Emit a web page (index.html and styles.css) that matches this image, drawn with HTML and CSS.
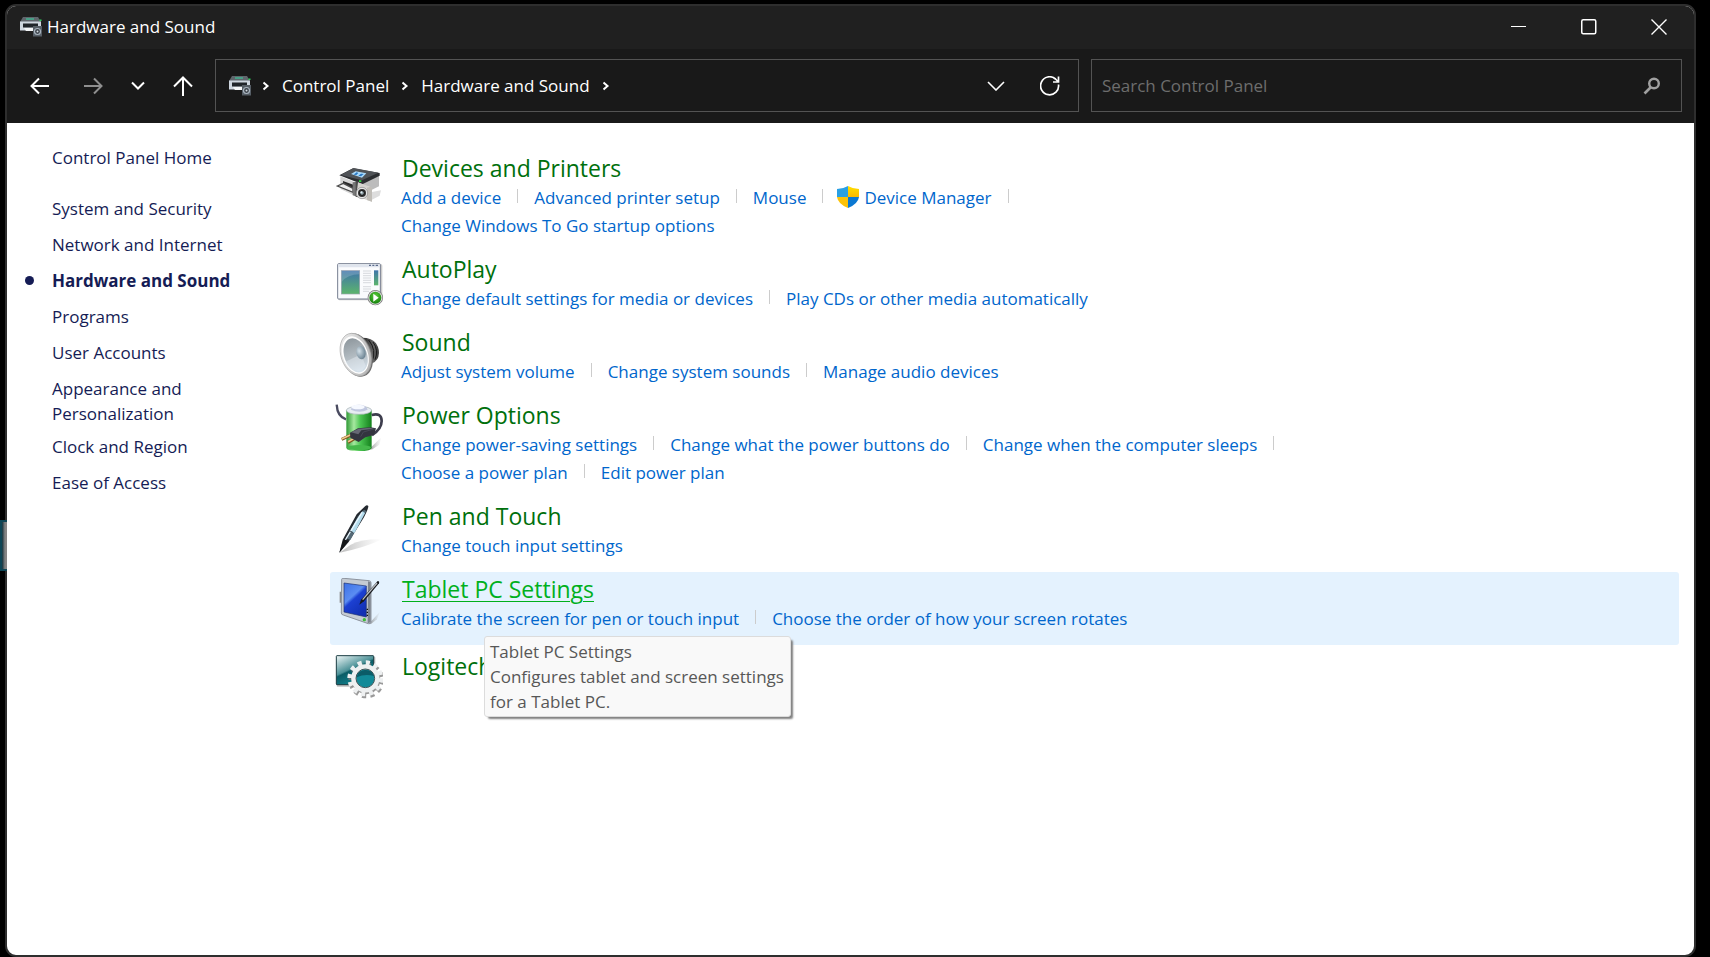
FILE: index.html
```html
<!DOCTYPE html>
<html lang="en">
<head>
<meta charset="utf-8">
<meta name="viewport" content="width=device-width, initial-scale=1">
<title>Hardware and Sound</title>
<link rel="stylesheet" href="styles.css">
</head>
<body>
<svg class="defs" aria-hidden="true">
  <defs>
    <linearGradient id="screenBlueGreen" x1="0" y1="0" x2="0" y2="1"><stop offset="0" stop-color="#3f74ab"/><stop offset="1" stop-color="#5cb56c"/></linearGradient>
    <linearGradient id="metal" x1="0" y1="0" x2="1" y2="1"><stop offset="0" stop-color="#f4f4f4"/><stop offset="1" stop-color="#a9a9a9"/></linearGradient>
    <linearGradient id="cone" x1="0" y1="0" x2="0" y2="1"><stop offset="0" stop-color="#8f989e"/><stop offset=".6" stop-color="#b9c2c8"/><stop offset="1" stop-color="#d8e4ee"/></linearGradient>
    <linearGradient id="magnet" x1="0" y1="0" x2="1" y2="0"><stop offset="0" stop-color="#222"/><stop offset=".7" stop-color="#666"/><stop offset="1" stop-color="#333"/></linearGradient>
    <linearGradient id="cell" x1="0" y1="0" x2="1" y2="0"><stop offset="0" stop-color="#2f9a35"/><stop offset=".3" stop-color="#a6e8a0"/><stop offset=".55" stop-color="#4cc653"/><stop offset="1" stop-color="#14801c"/></linearGradient>
    <linearGradient id="tabletScreen" x1="0" y1="0" x2=".6" y2="1"><stop offset="0" stop-color="#3c70e6"/><stop offset=".45" stop-color="#5b8df2"/><stop offset=".55" stop-color="#1c40d2"/><stop offset="1" stop-color="#1230b4"/></linearGradient>
    <linearGradient id="teal" x1="0" y1="0" x2=".6" y2="1"><stop offset="0" stop-color="#f2f9f9"/><stop offset=".5" stop-color="#4a9096"/><stop offset=".55" stop-color="#0a5c66"/><stop offset="1" stop-color="#148a96"/></linearGradient>
    <radialGradient id="playGreen" cx=".5" cy=".35" r=".7"><stop offset="0" stop-color="#5ccf3a"/><stop offset="1" stop-color="#0f7a08"/></radialGradient>
    <radialGradient id="dome" cx=".35" cy=".35" r=".7"><stop offset="0" stop-color="#d4e0e8"/><stop offset="1" stop-color="#68808f"/></radialGradient>
    <linearGradient id="shadow" x1="0" y1="0" x2="1" y2="0"><stop offset="0" stop-color="#777" stop-opacity=".7"/><stop offset="1" stop-color="#aaa" stop-opacity="0"/></linearGradient>
    <linearGradient id="shieldYellow" x1="0" y1="0" x2="0" y2="1"><stop offset="0" stop-color="#ffe000"/><stop offset="1" stop-color="#fcb900"/></linearGradient>
    <symbol id="hardware" viewBox="0 0 24 20">
      <path d="M4 0h15l3 5H1z" fill="#5f666c"/><path d="M7 2h8" stroke="#35d6a0" stroke-width="1.2"/>
      <path d="M1 4.500h21v9H1z" fill="#ced6df"/><path d="M4 6.500h15v4H4z" fill="#20252a"/><path d="M20.500 2.500h2v1.500h-2z" fill="#30d060"/>
      <path d="M5 11h11v3H7z" fill="#f3f5f7"/><path d="M14 9h9v10.500h-9z" fill="#565e66"/>
      <circle cx="18.500" cy="14.500" r="3" fill="#3a4148" stroke="#a9b4bf" stroke-width="1.200"/><circle cx="18.500" cy="14.500" r="1" fill="#d3dbe2"/>
    </symbol>
    <symbol id="chevron" viewBox="0 0 8 10"><path d="M1.500 1.500 5.500 5l-4 3.500" fill="none" stroke="#fff" stroke-width="2"/></symbol>
  </defs>
</svg>
<div class="wallpaper-glow"></div>
<div class="window">
  <header class="titlebar">
    <svg class="titlebar-icon" aria-hidden="true"><use href="#hardware"/></svg>
    <h1 class="titlebar-text">Hardware and Sound</h1>
    <div class="caption-buttons">
      <button class="caption-button" type="button" aria-label="Minimize"><svg width="16" height="16" viewBox="0 0 16 16"><path d="M0 7.500h15" stroke="#fff" stroke-width="1"/></svg></button>
      <button class="caption-button" type="button" aria-label="Maximize"><svg width="16" height="16" viewBox="0 0 16 16"><rect x=".75" y=".75" width="14" height="14" rx="1.500" fill="none" stroke="#fff" stroke-width="1.500"/></svg></button>
      <button class="caption-button" type="button" aria-label="Close"><svg width="16" height="16" viewBox="0 0 16 16"><path d="M.500.500l15 15M15.500.500l-15 15" stroke="#fff" stroke-width="1.400"/></svg></button>
    </div>
  </header>

  <div class="toolbar">
    <div class="history">
      <button class="tool-button" type="button" aria-label="Back"><svg width="20" height="18" viewBox="0 0 20 18"><path d="M19 9H2M9 1.500 1.500 9 9 16.500" fill="none" stroke="#fff" stroke-width="2"/></svg></button>
      <button class="tool-button" type="button" aria-label="Forward"><svg width="20" height="18" viewBox="0 0 20 18"><path d="M1 9h17M11 1.500 18.500 9 11 16.500" fill="none" stroke="#8f8f8f" stroke-width="2"/></svg></button>
      <button class="tool-button tool-button-small" type="button" aria-label="Recent locations"><svg width="14" height="10" viewBox="0 0 14 10"><path d="m1 1.500 6 6 6-6" fill="none" stroke="#fff" stroke-width="2"/></svg></button>
      <button class="tool-button" type="button" aria-label="Up"><svg width="20" height="20" viewBox="0 0 20 20"><path d="M10 20V2M1 10.500 10 1.500l9 9" fill="none" stroke="#fff" stroke-width="2"/></svg></button>
    </div>
    <div class="address">
      <svg class="address-icon" aria-hidden="true"><use href="#hardware"/></svg>
      <nav class="crumbs" aria-label="Address">
        <svg class="crumb-arrow"><use href="#chevron"/></svg>
        <a href="#home">Control Panel</a>
        <svg class="crumb-arrow"><use href="#chevron"/></svg>
        <a href="#hardware-and-sound">Hardware and Sound</a>
        <svg class="crumb-arrow"><use href="#chevron"/></svg>
      </nav>
      <button class="tool-button tool-button-wide" type="button" aria-label="Previous locations"><svg width="18" height="10" viewBox="0 0 18 10"><path d="m1 1 8 8 8-8" fill="none" stroke="#fff" stroke-width="1.600"/></svg></button>
      <button class="tool-button tool-button-wide" type="button" aria-label="Refresh"><svg width="20" height="20" viewBox="0 0 20 20"><path d="M18.500 8.500A9 9 0 1 1 15.500 3L18 5.500M18.500.500v5.500H13" fill="none" stroke="#fff" stroke-width="1.700"/></svg></button>
    </div>
    <form class="search" role="search">
      <input class="search-input" type="text" placeholder="Search Control Panel" aria-label="Search Control Panel">
      <svg width="18" height="18" viewBox="0 0 18 18" aria-hidden="true"><circle cx="11" cy="6.500" r="4.800" fill="none" stroke="#a0a0a0" stroke-width="2.400"/><path d="M8 10 1.500 16.500" stroke="#a0a0a0" stroke-width="2.600"/></svg>
    </form>
  </div>

  <div class="content">
    <nav class="sidebar" aria-label="Categories">
      <a class="home-link" href="#home">Control Panel Home</a>
      <ul class="category-list">
        <li><a href="#system">System and Security</a></li>
        <li><a href="#network">Network and Internet</a></li>
        <li class="current"><a href="#hardware-and-sound" aria-current="page">Hardware and Sound</a></li>
        <li><a href="#programs">Programs</a></li>
        <li><a href="#users">User Accounts</a></li>
        <li class="two-line"><a href="#appearance">Appearance and Personalization</a></li>
        <li><a href="#clock">Clock and Region</a></li>
        <li><a href="#ease">Ease of Access</a></li>
      </ul>
    </nav>

    <main class="groups">
      <section class="group">
        <svg class="group-icon" viewBox="0 0 144 144" aria-hidden="true">
          <path d="M96 108l42-8-4 16-26 14z" fill="#ddd"/>
          <path d="M16 58l56 22v42L16 96z" fill="#d5d5d5"/><path d="M72 78l60-22v32l-60 30z" fill="#bcbcbc"/>
          <path d="M13 55 54 34l80 14v8L82 82z" fill="#2c2e31"/><path d="M17 54 56 33l74 14-49 23z" fill="#505357"/>
          <path d="M48 51 62 43l32 6-13 13z" fill="#a9d9fa"/><path d="m56 53 9-7 5 2-6 6zM70 56l8-6 8 1-8 7z" fill="#2b79c4"/>
          <path d="M24 72l31 11v20L24 91z" fill="#292929"/><path d="M7 87l18-8 29 15v12z" fill="#eee" stroke="#4b4b4b" stroke-width="4"/>
          <path d="M53 76l14-2v45l-14-4z" fill="#777"/><path d="M62 75l8-2v48l-8-2z" fill="#4d4d4d"/>
          <path d="M69 76l36 13 6 5v40l-10-3-37-15z" fill="#d6d4d0"/><path d="M96 92l12-3 3 5v40l-15-5z" fill="#c0bdb7"/>
          <circle cx="81" cy="108" r="17" fill="#e8e8e8" stroke="#888" stroke-width="2"/><circle cx="81" cy="108" r="12" fill="#343434"/><circle cx="81" cy="108" r="7" fill="#94a5ac" stroke="#111" stroke-width="3"/><circle cx="79" cy="106" r="3" fill="#e1f0f5"/>
          <path d="M72 70h7v5h-7z" fill="#31d542"/>
        </svg>
        <div class="group-body">
          <h2 class="group-title"><a href="#devices">Devices and Printers</a></h2>
          <ul class="tasks">
            <li><a href="#add">Add a device</a></li>
            <li><a href="#printer">Advanced printer setup</a></li>
            <li><a href="#mouse">Mouse</a></li>
            <li class="shielded"><svg class="shield" viewBox="0 0 22 22" aria-hidden="true"><path d="M11 0v11H0V3Q6 3 11 0z" fill="#2aa0e4"/><path d="M11 0q5 3 11 3v8H11z" fill="url(#shieldYellow)"/><path d="M0 11h11v11Q1 18 0 11z" fill="#fcc208"/><path d="M22 11H11v11q10-4 11-11z" fill="#0b78d2"/></svg><a href="#device-manager">Device Manager</a></li>
            <li><a href="#togo">Change Windows To Go startup options</a></li>
          </ul>
        </div>
      </section>

      <section class="group">
        <svg class="group-icon" viewBox="0 0 144 144" aria-hidden="true">
          <rect x="10" y="19" width="132" height="108" rx="4" fill="#000" opacity=".2"/>
          <rect x="8" y="17" width="128" height="106" rx="3" fill="#fafbfd" stroke="#767e90" stroke-width="3"/>
          <path d="M10 19h124v9H10z" fill="#dfe4ed"/><path d="M102 20h6v4h-6zM112 20h6v4h-6zM122 20h7v4h-7z" fill="#5c6c8c"/>
          <rect x="19" y="38" width="55" height="70" fill="url(#screenBlueGreen)" stroke="#98a1ad" stroke-width="2"/><path d="M20 72q18-23 53-23V39H20z" fill="#fff" opacity=".18"/>
          <path d="M84 39h24M84 46h24M84 53h24M84 60h24M84 67h24M84 74h24M84 86h24M84 93h24M84 100h18" stroke="#c6c9ce" stroke-width="2"/>
          <rect x="117" y="37" width="13" height="45" fill="url(#screenBlueGreen)"/>
          <circle cx="121" cy="119" r="23" fill="#777"/><circle cx="121" cy="119" r="21" fill="#ddd"/><circle cx="121" cy="119" r="18" fill="url(#playGreen)"/><path d="M115 107l16 12-16 12z" fill="#fff"/>
        </svg>
        <div class="group-body">
          <h2 class="group-title"><a href="#autoplay">AutoPlay</a></h2>
          <ul class="tasks">
            <li><a href="#media">Change default settings for media or devices</a></li>
            <li><a href="#cds">Play CDs or other media automatically</a></li>
          </ul>
        </div>
      </section>

      <section class="group">
        <svg class="group-icon" viewBox="0 0 144 144" aria-hidden="true">
          <path d="M80 20q32 0 43 17 13 20 7 41-5 16-29 23z" fill="url(#magnet)"/><path d="M101 27q25 30 10 66M114 33q18 25 6 53" fill="none" stroke="#171717" stroke-width="3"/>
          <ellipse cx="66" cy="72" rx="45" ry="67" transform="rotate(-19 66 72)" fill="#707070"/>
          <ellipse cx="62" cy="71" rx="44" ry="66" transform="rotate(-19 62 71)" fill="url(#metal)" stroke="#ababab" stroke-width="2"/>
          <ellipse cx="61" cy="72" rx="38" ry="58" transform="rotate(-19 61 72)" fill="#fff"/>
          <ellipse cx="62" cy="73" rx="34" ry="53" transform="rotate(-19 62 73)" fill="url(#cone)"/>
          <path d="M30 93l48-23 14 34q-8 18-24 16Q45 119 30 93z" fill="#e6eef4" opacity=".45"/>
          <ellipse cx="78" cy="65" rx="14" ry="20" transform="rotate(-12 78 65)" fill="url(#dome)"/>
        </svg>
        <div class="group-body">
          <h2 class="group-title"><a href="#sound">Sound</a></h2>
          <ul class="tasks">
            <li><a href="#volume">Adjust system volume</a></li>
            <li><a href="#sounds">Change system sounds</a></li>
            <li><a href="#audio">Manage audio devices</a></li>
          </ul>
        </div>
      </section>

      <section class="group">
        <svg class="group-icon" viewBox="0 0 144 144" aria-hidden="true">
          <path d="M106 132l34-33-7 23-23 15z" fill="url(#shadow)"/>
          <path d="M5 2q2 36 28 44" fill="none" stroke="#4a4b60" stroke-width="7"/>
          <path d="M34 18v113q0 10 38 10t38-10V18z" fill="url(#cell)"/>
          <ellipse cx="72" cy="131" rx="36" ry="8" fill="#45b94b"/>
          <ellipse cx="72" cy="19" rx="38" ry="12" fill="#e8edf3" stroke="#a4b1b4" stroke-width="2"/><path d="M48 17q2-15 24-15t26 15q-24 12-50 0z" fill="#c0c7df"/><ellipse cx="69" cy="9" rx="20" ry="7" fill="#f6f9ff"/>
          <path d="M110 33q30-8 30 18 0 24-29 42" fill="none" stroke="#3d3d4d" stroke-width="8"/>
          <path d="M20 106l32-15M39 115l30-17" stroke="#80571f" stroke-width="9"/><path d="M20 105l32-15M39 113l30-17" stroke="#efc78d" stroke-width="5"/>
          <path d="M45 86l24-13 37-3 17 3-6 20-26 7-20 14-25-13z" fill="#33343f"/><path d="M48 85l23-11 33-3 13 3-38 5-9 12z" fill="#666774"/><path d="M77 98l8-14 35-10" fill="none" stroke="#464756" stroke-width="3"/>
        </svg>
        <div class="group-body">
          <h2 class="group-title"><a href="#power">Power Options</a></h2>
          <ul class="tasks">
            <li><a href="#saving">Change power-saving settings</a></li>
            <li><a href="#buttons">Change what the power buttons do</a></li>
            <li><a href="#sleep">Change when the computer sleeps</a></li>
            <li><a href="#plan">Choose a power plan</a></li>
            <li><a href="#edit-plan">Edit power plan</a></li>
          </ul>
        </div>
      </section>

      <section class="group">
        <svg class="group-icon" viewBox="0 0 144 144" aria-hidden="true">
          <path d="M14 143 47 119q35-18 95-16-64 29-128 40z" fill="url(#shadow)" opacity=".7"/>
          <path d="M91 3q5-5 9 0 1 6-13 34L41 111 13 143l10-39 42-76z" fill="#252a30"/>
          <path d="M87 14l7 4-48 87-13-5 36-66z" fill="#566b78"/><path d="M82 19l8 5-32 61-13-6 21-37z" fill="#b4dced"/><path d="M81 22 31 105" stroke="#ebf8ff" stroke-width="4"/><path d="M41 76l14 7" stroke="#36454f" stroke-width="3"/><path d="M26 102l14 7-27 34z" fill="#151719"/>
        </svg>
        <div class="group-body">
          <h2 class="group-title"><a href="#pen">Pen and Touch</a></h2>
          <ul class="tasks">
            <li><a href="#touch">Change touch input settings</a></li>
          </ul>
        </div>
      </section>

      <section class="group group-hover">
        <svg class="group-icon" viewBox="0 0 144 144" aria-hidden="true">
          <path d="M104 135l32-35-10 24-18 14z" fill="url(#shadow)"/>
          <path d="M20 4q0-4 7-3l75 7q6 1 6 6v118q0 7-8 5L25 111q-6-1-6-6z" fill="#c5cbd3" stroke="#8c939d" stroke-width="3"/>
          <path d="M99 10l8 3v120l-9 3z" fill="#7d848e"/><path d="M18 43h-2v29h2" fill="none" stroke="#888" stroke-width="4"/>
          <path d="M27 15l67 9v93l-67-15z" fill="url(#tabletScreen)" stroke="#1d306f" stroke-width="2"/>
          <path d="M97 92v4M97 101v4M97 110v4" stroke="#111" stroke-width="4"/><circle cx="88" cy="125" r="5" fill="#3cbc38"/>
          <path d="M128 9q6 0 4 7L87 70l-14 10 5-15z" fill="#17191d"/><path d="M126 15 83 65" stroke="#b9bcc1" stroke-width="4"/>
        </svg>
        <div class="group-body">
          <h2 class="group-title"><a href="#tablet" aria-describedby="tablet-tip">Tablet PC Settings</a></h2>
          <ul class="tasks">
            <li><a href="#calibrate">Calibrate the screen for pen or touch input</a></li>
            <li><a href="#rotate">Choose the order of how your screen rotates</a></li>
          </ul>
        </div>
        <div class="tooltip" role="tooltip" id="tablet-tip">Tablet PC Settings<br>Configures tablet and screen settings for a Tablet PC.</div>
      </section>

      <section class="group group-plain">
        <svg class="group-icon" viewBox="0 0 144 144" aria-hidden="true">
          <rect x="5" y="5" width="116" height="90" rx="3" fill="#000" opacity=".25"/>
          <rect x="4" y="2" width="112" height="87" rx="2" fill="url(#teal)" stroke="#1c3e44" stroke-width="3"/>
          <g fill="none" stroke="#777" opacity=".75"><circle cx="94" cy="76" r="34" stroke-width="15"/><circle cx="94" cy="76" r="47" stroke-width="14" stroke-dasharray="12.300 12.300"/></g>
          <circle cx="91" cy="70" r="28" fill="#128a98"/>
          <g fill="none" stroke="#eef0f1"><circle cx="91" cy="70" r="35" stroke-width="15"/><circle cx="91" cy="70" r="47" stroke-width="14" stroke-dasharray="12.300 12.300"/></g>
          <circle cx="91" cy="70" r="28" fill="none" stroke="#3d5357" stroke-width="3"/><path d="M65 67a27 27 0 0 1 52-4q-27-8-52 4z" fill="#063e48" opacity=".6"/>
        </svg>
        <div class="group-body">
          <h2 class="group-title"><a href="#logitech">Logitech</a></h2>
        </div>
      </section>
    </main>
  </div>
</div>
</body>
</html>
```
FILE: styles.css
```css
* { box-sizing: border-box; }

body {
  margin: 0;
  padding: 4px 14px 0 5px;
  background: #000;
  font-family: "Open Sans", "Noto Sans", sans-serif;
  font-size: 17px;
  line-height: 25px;
}

a { color: inherit; text-decoration: none; }
a:hover { text-decoration: underline; }
ul { list-style: none; margin: 0; padding: 0; }
h1, h2 { margin: 0; font-weight: 400; }

.defs { position: absolute; width: 0; height: 0; }

/* Desktop light that shows through the window's left edge */
.wallpaper-glow {
  position: absolute;
  z-index: 1;
  left: 0;
  top: 520px;
  width: 7px;
  height: 51px;
  border: 2px solid #0d4555;
  border-right: 0;
  background: linear-gradient(90deg, #12303a, #858585 60%);
}

.window {
  display: flex;
  flex-direction: column;
  min-height: calc(100vh - 4px);
  border: 2px solid #2e2e2e;
  border-radius: 11px;
  background: #fff;
  overflow: hidden;
}

.titlebar {
  display: flex;
  align-items: center;
  height: 43px;
  padding: 0 0 2px 12px;
  background: #202020;
  color: #fff;
}
.titlebar-icon, .address-icon { width: 24px; height: 20px; flex: none; }
.titlebar-text { margin-left: 4px; font-size: 17px; line-height: 25px; }
.caption-buttons { display: flex; margin-left: auto; height: 100%; }
.caption-button {
  display: grid;
  place-items: center;
  width: 70px;
  padding: 0;
  border: 0;
  background: transparent;
}

.toolbar {
  display: grid;
  grid-template-columns: auto minmax(0, 19fr) minmax(0, 13fr);
  gap: 12px;
  padding: 10px 12px 11px 13px;
  height: 74px;
  background: #191919;
  color: #fff;
}
.history { display: flex; align-items: center; gap: 13px; }
.tool-button {
  display: grid;
  place-items: center;
  width: 40px;
  height: 40px;
  padding: 0;
  border: 0;
  background: transparent;
}
.tool-button-small { width: 24px; }
.tool-button-wide { width: 44px; }
.address, .search {
  display: flex;
  align-items: center;
  border: 1px solid #535353;
}
.address { gap: 10px; padding: 0 6px 0 12px; }
.search { padding: 0 20px 0 10px; }
.crumbs { display: flex; align-items: center; gap: 12px; flex: 1; white-space: nowrap; }
.crumb-arrow { width: 8px; height: 10px; }
.search-input {
  flex: 1;
  min-width: 0;
  padding: 0;
  border: 0;
  outline: 0;
  background: transparent;
  color: #fff;
  font: inherit;
}
.search-input::placeholder { color: #6d6d6d; opacity: 1; }

.content { display: flex; flex: 1; }

.sidebar { flex: 0 0 323px; padding: 22px 0 0 45px; color: #151c55; }
.home-link { display: block; margin-bottom: 26px; }
.category-list li { position: relative; width: 200px; margin-bottom: 11px; }
.category-list .two-line { width: 150px; margin-bottom: 8px; }
.current { font-weight: 700; }
.current::before {
  content: "";
  position: absolute;
  left: -27px;
  top: 8px;
  width: 9px;
  height: 9px;
  border-radius: 50%;
  background: #151c55;
}

.groups { flex: 1; min-width: 0; padding: 28px 15px 0 0; }
.group {
  position: relative;
  display: flex;
  gap: 18px;
  padding: 2px 5px 12px;
  border-radius: 3px;
}
.group-plain { padding-top: 6px; }
.group-hover { background: #e4f2fe; }
.group-icon { flex: none; width: 48px; height: 48px; margin-top: 4px; }
.group-body { flex: 0 1 910px; min-width: 0; }
.group-title { margin-bottom: 1px; padding-left: 1px; font-size: 23px; line-height: 30px; color: #00700c; }
.group-hover .group-title { color: #00b01c; text-decoration: underline; text-decoration-thickness: 1px; text-underline-offset: 3px; }

.tasks { display: flex; flex-wrap: wrap; line-height: 28px; color: #0066cc; }
.tasks li { display: flex; align-items: center; }
.tasks li:not(:last-child)::after {
  content: "";
  width: 1px;
  height: 14px;
  margin: 0 16px 4px;
  background: #ccc;
}
.shield { width: 22px; height: 22px; margin: 0 5px 3px 0; }
.tasks .shielded { margin-left: -2px; }

.tooltip {
  position: absolute;
  z-index: 2;
  left: 154px;
  top: 64px;
  width: 307px;
  padding: 2px 5px;
  border: 1px solid #dcdcdc;
  border-radius: 3px;
  background: #f9f9f9;
  box-shadow: 3px 3px 2px -1px #808080;
  color: #575757;
}
```
